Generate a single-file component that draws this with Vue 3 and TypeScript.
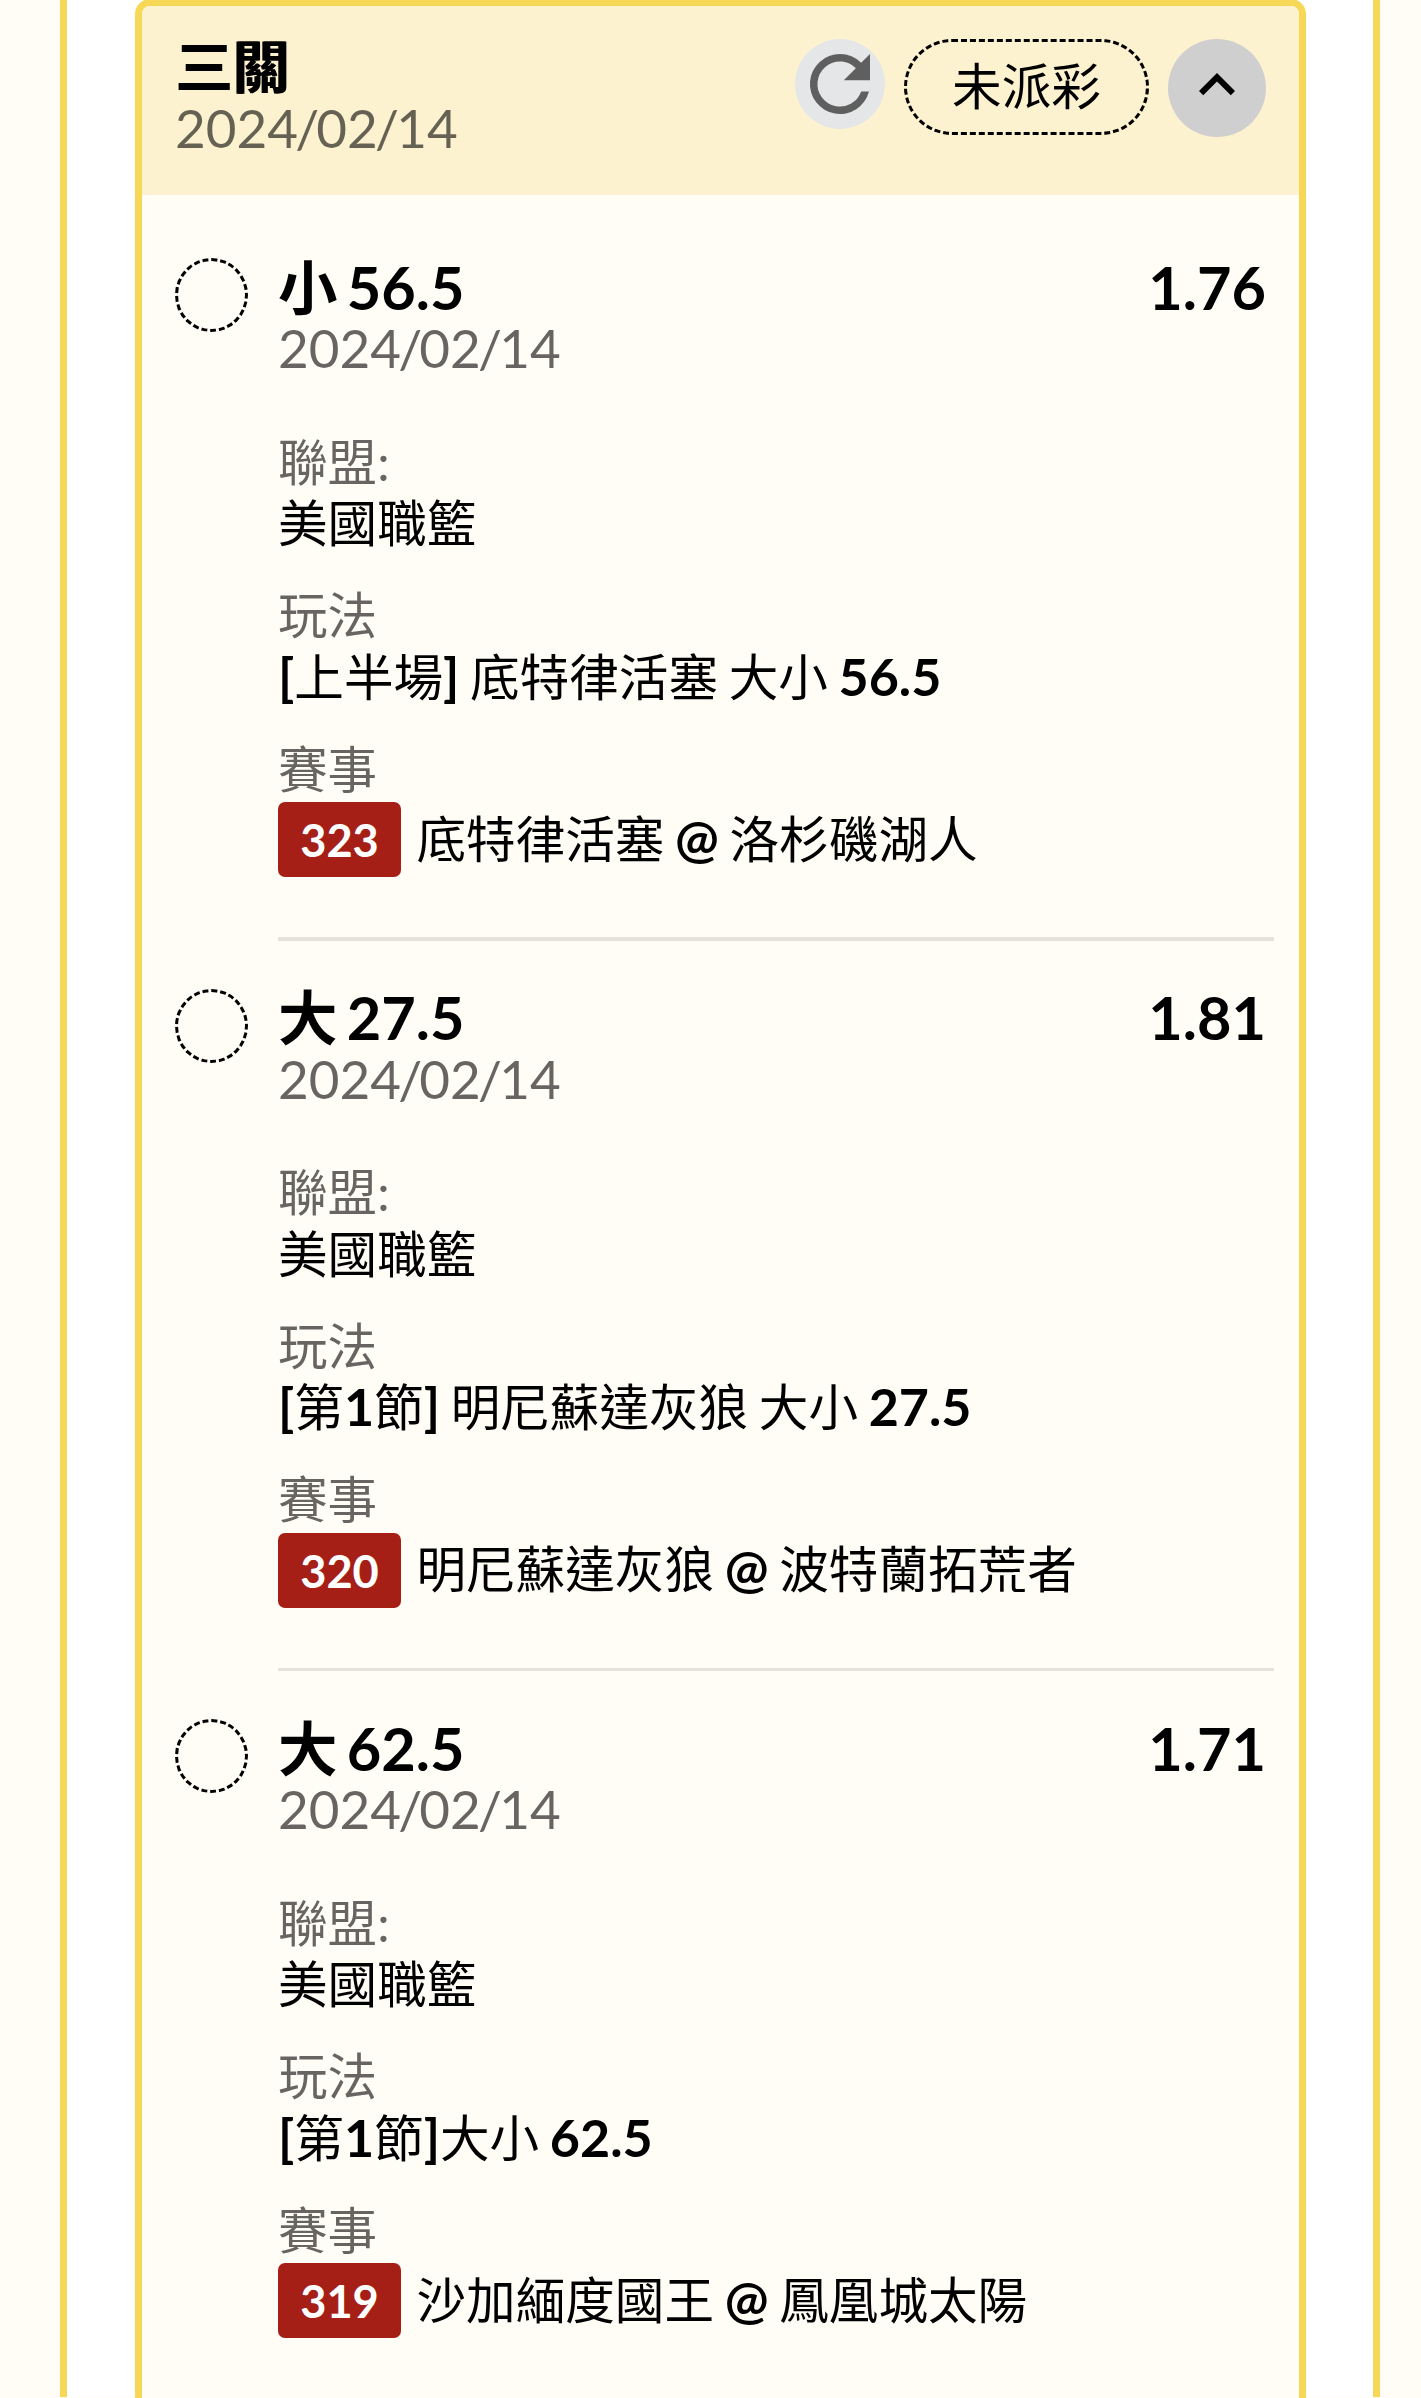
<script setup lang="ts">
interface Leg {
  id: number
  pick: string
  line: string
  date: string
  odds: string
  league: string
  play: string
  code: string
  match: string
}

interface Run {
  text: string
  latin: boolean
}

const legs: Leg[] = [
  {
    id: 1,
    pick: '小',
    line: '56.5',
    date: '2024/02/14',
    odds: '1.76',
    league: '美國職籃',
    play: '[上半場] 底特律活塞 大小 56.5',
    code: '323',
    match: '底特律活塞 @ 洛杉磯湖人',
  },
  {
    id: 2,
    pick: '大',
    line: '27.5',
    date: '2024/02/14',
    odds: '1.81',
    league: '美國職籃',
    play: '[第1節] 明尼蘇達灰狼 大小 27.5',
    code: '320',
    match: '明尼蘇達灰狼 @ 波特蘭拓荒者',
  },
  {
    id: 3,
    pick: '大',
    line: '62.5',
    date: '2024/02/14',
    odds: '1.71',
    league: '美國職籃',
    play: '[第1節]大小 62.5',
    code: '319',
    match: '沙加緬度國王 @ 鳳凰城太陽',
  },
]

// Latin runs are set bold while the Chinese runs stay regular.
function runs(text: string): Run[] {
  return (text.match(/[\x20-\x7e]+|[^\x20-\x7e]+/g) ?? []).map((part) => ({
    text: part,
    latin: /^[\x20-\x7e]/.test(part),
  }))
}

// Slashes sit tighter than the digits, so the date is split around them.
function dateParts(date: string): string[] {
  return date.split(/(\/)/)
}
</script>

<template>
  <main class="page">
    <section class="panel">
      <article class="card">
        <header class="head">
          <div class="head-text">
            <h1 class="head-title">三關</h1>
            <div class="date"><span v-for="(c, i) in dateParts('2024/02/14')" :key="i" :class="{ slash: c === '/' }">{{ c }}</span></div>
          </div>
          <div class="actions">
            <button class="refresh" type="button" aria-label="refresh">
              <svg viewBox="0 0 24 24" width="90" height="90">
                <path
                  fill="#5f5f5f"
                  d="M17.65 6.35A7.96 7.96 0 0 0 12 4a8 8 0 1 0 7.73 10h-2.08A6 6 0 1 1 12 6c1.66 0 3.14.69 4.22 1.78L13 11h7V4l-2.35 2.35z"
                />
              </svg>
            </button>
            <span class="status">未派彩</span>
            <button class="toggle" type="button" aria-label="collapse">
              <svg viewBox="0 0 24 24" width="72" height="72">
                <path d="M12 8l-6 6 1.41 1.41L12 10.83l4.59 4.58L18 14z" />
              </svg>
            </button>
          </div>
        </header>

        <div class="legs">
          <section v-for="leg in legs" :key="leg.id" class="leg">
            <span class="mark"></span>
            <div class="main">
              <div class="leg-head">
                <div>
                  <h2 class="pick">{{ leg.pick }} {{ leg.line }}</h2>
                  <div class="date"><span v-for="(c, i) in dateParts(leg.date)" :key="i" :class="{ slash: c === '/' }">{{ c }}</span></div>
                </div>
                <strong class="odds">{{ leg.odds }}</strong>
              </div>
              <dl class="fields">
                <div>
                  <dt>聯盟:</dt>
                  <dd>{{ leg.league }}</dd>
                </div>
                <div>
                  <dt>玩法</dt>
                  <dd><span v-for="(r, i) in runs(leg.play)" :key="i" :class="{ latin: r.latin }">{{ r.text }}</span></dd>
                </div>
                <div>
                  <dt>賽事</dt>
                  <dd class="match">
                    <span class="code">{{ leg.code }}</span>
                    <span class="teams"><span v-for="(r, i) in runs(leg.match)" :key="i" :class="{ latin: r.latin }">{{ r.text }}</span></span>
                  </dd>
                </div>
              </dl>
            </div>
          </section>
        </div>
      </article>
    </section>
  </main>
</template>

<style>
body {
  margin: 0;
  background: #fffdf6;
}
</style>

<style scoped>
.page {
  box-sizing: border-box;
  width: 1421px;
  height: 2398px;
  padding: 0 41px 0 60px;
  overflow: hidden;
  background: #fffdf6;
  color: #000;
  font-family: Lato, 'Noto Sans CJK TC', sans-serif;
  font-size: 49.6px;
}

.panel {
  box-sizing: border-box;
  height: 100%;
  padding: 0 67px 0 68px;
  border: solid #f7d756;
  border-width: 0 7px;
  background: #fff;
}

.card {
  box-sizing: border-box;
  height: 2440px;
  margin-top: -1px;
  overflow: hidden;
  border: 7px solid #f7d756;
  border-radius: 15px;
  background: #fffdf6;
}

.head {
  display: flex;
  box-sizing: border-box;
  justify-content: space-between;
  height: 189px;
  padding: 32px 33px 0;
  background: #fdf2cf;
}

.head-title,
.pick {
  margin: 0;
  font-weight: 700;
  white-space: pre;
}

.head-title {
  margin-bottom: 3px;
  font-size: 57px;
  line-height: 57px;
  text-shadow: 1.5px 0 0 #000;
}

.date {
  color: rgba(0, 0, 0, 0.6);
  font-size: 53px;
  line-height: 60px;
}

.slash {
  margin: 0 -2.8px;
}

.actions {
  display: flex;
  align-items: flex-start;
  gap: 19px;
  padding-top: 1px;
}

.refresh,
.toggle {
  display: flex;
  align-items: center;
  justify-content: center;
  padding: 0;
  border: 0;
  border-radius: 50%;
}

.refresh {
  width: 90px;
  height: 90px;
  background: #e4e6e8;
}

.toggle {
  box-sizing: border-box;
  width: 98px;
  height: 98px;
  padding-bottom: 7px;
  background: #cfcfcf;
}

.status {
  box-sizing: border-box;
  width: 245px;
  height: 96px;
  border: 3px dashed #000;
  border-radius: 48px;
  line-height: 88px;
  text-align: center;
}

.legs {
  padding: 15.4px 25px 0 33px;
}

.leg {
  display: flex;
  box-sizing: border-box;
  height: 730.5px;
  padding-top: 46.2px;
}

.mark {
  flex: none;
  box-sizing: border-box;
  width: 73px;
  height: 74px;
  margin: 1.5px 30px 0 0;
  border: 3px dashed #000;
  border-radius: 50%;
}

.main {
  flex: 1;
  border-bottom: 3px solid #e5e2dc;
}

.leg:first-child .main {
  border-bottom-width: 4px;
}

.leg-head {
  display: flex;
  align-items: flex-start;
  justify-content: space-between;
  padding-right: 8px;
}

.pick,
.odds {
  font-size: 59.5px;
  font-weight: 700;
  line-height: 61.5px;
  word-spacing: -5.2px;
}

.fields {
  display: flex;
  flex-direction: column;
  gap: 30.5px;
  margin: 53.5px 0 0;
  line-height: 61.5px;
}

.fields dt {
  color: rgba(0, 0, 0, 0.6);
}

.fields dd {
  margin: 0;
  white-space: pre;
}

.latin {
  font-size: 52px;
  font-weight: 700;
  line-height: 1;
  word-spacing: -2px;
}

.fields .match {
  display: flex;
  align-items: center;
  gap: 15.5px;
  margin-top: 2px;
}

.code {
  width: 123px;
  height: 75px;
  border-radius: 7px;
  background: #a61f17;
  color: #fff;
  font-size: 45.2px;
  font-weight: 700;
  line-height: 76px;
  text-align: center;
}
</style>
